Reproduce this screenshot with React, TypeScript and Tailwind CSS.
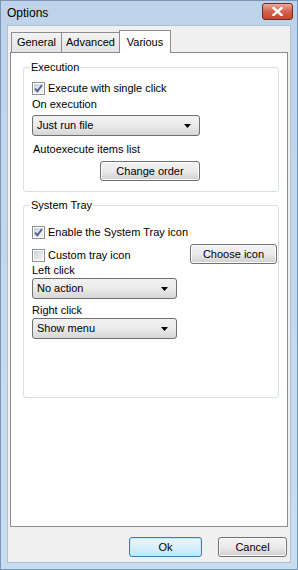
import React from 'react';

const font = "font-['Liberation_Sans',Arial,sans-serif]";

const CheckBox: React.FC<{ checked?: boolean; label: string }> = ({ checked = false, label }) => (
  <label className="flex items-center h-[15px] gap-[3px] text-[11px] text-black leading-[15px]">
    <span className="w-[13px] h-[13px] border border-[#8e8f8f] bg-white p-[1px] flex">
      <span className="flex-1 bg-gradient-to-br from-[#cbcfd5] to-[#f6f6f6] flex items-center justify-center">
        {checked && (
          <svg width="9" height="9" viewBox="0 0 9 9">
            <path d="M1 4.5 L3.4 7.2 L8 1" fill="none" stroke="#4a5f97" strokeWidth="1.8" />
          </svg>
        )}
      </span>
    </span>
    <span>{label}</span>
  </label>
);

const Combo: React.FC<{ value: string; width: string }> = ({ value, width }) => (
  <div
    className={`${width} h-[21px] rounded-[3px] border border-[#707070] bg-gradient-to-b from-[#f2f2f2] via-[#ebebeb] to-[#d6d6d6] flex items-center justify-between pl-[4px] pr-[8px] text-[11px] text-black`}
  >
    <span>{value}</span>
    <svg width="7" height="4" viewBox="0 0 7 4">
      <path d="M0 0 H7 L3.5 4 Z" fill="#000" />
    </svg>
  </div>
);

const Button: React.FC<{ label: string; width: string; primary?: boolean }> = ({ label, width, primary }) => (
  <button
    className={`${width} h-[20px] rounded-[3px] border text-[11px] text-black flex items-center justify-center ${
      primary
        ? 'border-[#3c7fb1] bg-gradient-to-b from-[#eaf6fd] via-[#d9f0fc] to-[#bee6fd] shadow-[inset_0_0_0_1px_#c8e8f9]'
        : 'border-[#707070] bg-gradient-to-b from-[#f2f2f2] via-[#ebebeb] to-[#cfcfcf] shadow-[inset_0_0_0_1px_#fcfcfc]'
    }`}
  >
    {label}
  </button>
);

const Group: React.FC<{ title: string; className?: string; children: React.ReactNode }> = ({ title, className = '', children }) => (
  <fieldset className={`ml-[12px] w-[256px] border border-[#d5dfe5] rounded-[3px] px-[8px] ${className}`}>
    <legend className="-ml-[2px] px-[1px] text-[11px] leading-[15px] text-black">{title}</legend>
    {children}
  </fieldset>
);

const tabBase = 'h-[20px] border border-[#898c95] border-b-0 bg-gradient-to-b from-[#f3f3f3] to-[#e3e3e3] text-[11px] text-black flex items-center justify-center';

export default function App() {
  return (
    <div className={`${font} w-[298px] h-[570px] bg-gradient-to-b from-[#bed3ea] to-[#cadcef] border border-[#7a95b5] flex flex-col`}>
      <div className="h-[24px] flex items-center justify-between pl-[6px] pr-[4px]">
        <span className="text-[12px] text-black">Options</span>
        <div className="w-[31px] h-[17px] -mt-[4px] rounded-[3px] border border-[#6e2a25] bg-gradient-to-b from-[#e9a99c] via-[#d4614d] to-[#c8442e] flex items-center justify-center">
          <svg width="11" height="9" viewBox="0 0 11 9">
            <path d="M1.5 1 L9.5 8 M9.5 1 L1.5 8" stroke="#fff" strokeWidth="2.4" strokeLinecap="square" />
          </svg>
        </div>
      </div>

      <div className="mx-[6px] flex-1 bg-[#f0f0f0] border border-[#aebfd3] flex flex-col pb-[5px]">
        <div className="flex items-end pl-[3px] h-[26px]">
          <div className={`${tabBase} w-[51px]`}>General</div>
          <div className={`${tabBase} w-[58px] border-l-0`}>Advanced</div>
          <div className="h-[23px] w-[52px] -ml-px border border-[#898c95] border-b-0 bg-white text-[11px] text-black flex justify-center items-start pt-[3px] relative z-10 -mb-px">Various</div>
        </div>

        <div className="mx-[2px] flex-1 bg-white border border-[#898c95] pt-[7px]">
          <Group title="Execution" className="pb-[10px]">
            <div className="mt-[6px]">
              <CheckBox checked label="Execute with single click" />
            </div>
            <div className="mt-px h-[15px] leading-[15px] text-[11px] text-black">On execution</div>
            <div className="mt-[3px]">
              <Combo value="Just run file" width="w-[168px]" />
            </div>
            <div className="mt-[6px] h-[15px] leading-[15px] text-[11px] text-black pl-[1px]">Autoexecute items list</div>
            <div className="mt-[4px] pl-[68px]">
              <Button label="Change order" width="w-[100px]" />
            </div>
          </Group>

          <Group title="System Tray" className="mt-[6px] pb-[58px]">
            <div className="mt-[12px]">
              <CheckBox checked label="Enable the System Tray icon" />
            </div>
            <div className="mt-[8px] h-[15px] flex items-center justify-between">
              <CheckBox label="Custom tray icon" />
              <div className="-mr-[7px] -mt-[3px]">
                <Button label="Choose icon" width="w-[87px]" />
              </div>
            </div>
            <div className="h-[15px] leading-[15px] text-[11px] text-black">Left click</div>
            <div>
              <Combo value="No action" width="w-[145px]" />
            </div>
            <div className="mt-[4px] h-[15px] leading-[15px] text-[11px] text-black">Right click</div>
            <div>
              <Combo value="Show menu" width="w-[145px]" />
            </div>
          </Group>
        </div>

        <div className="flex justify-end gap-[16px] pr-[3px] pt-[10px]">
          <Button label="Ok" width="w-[73px]" primary />
          <Button label="Cancel" width="w-[69px]" />
        </div>
      </div>
      <div className="h-[6px]" />
    </div>
  );
}
